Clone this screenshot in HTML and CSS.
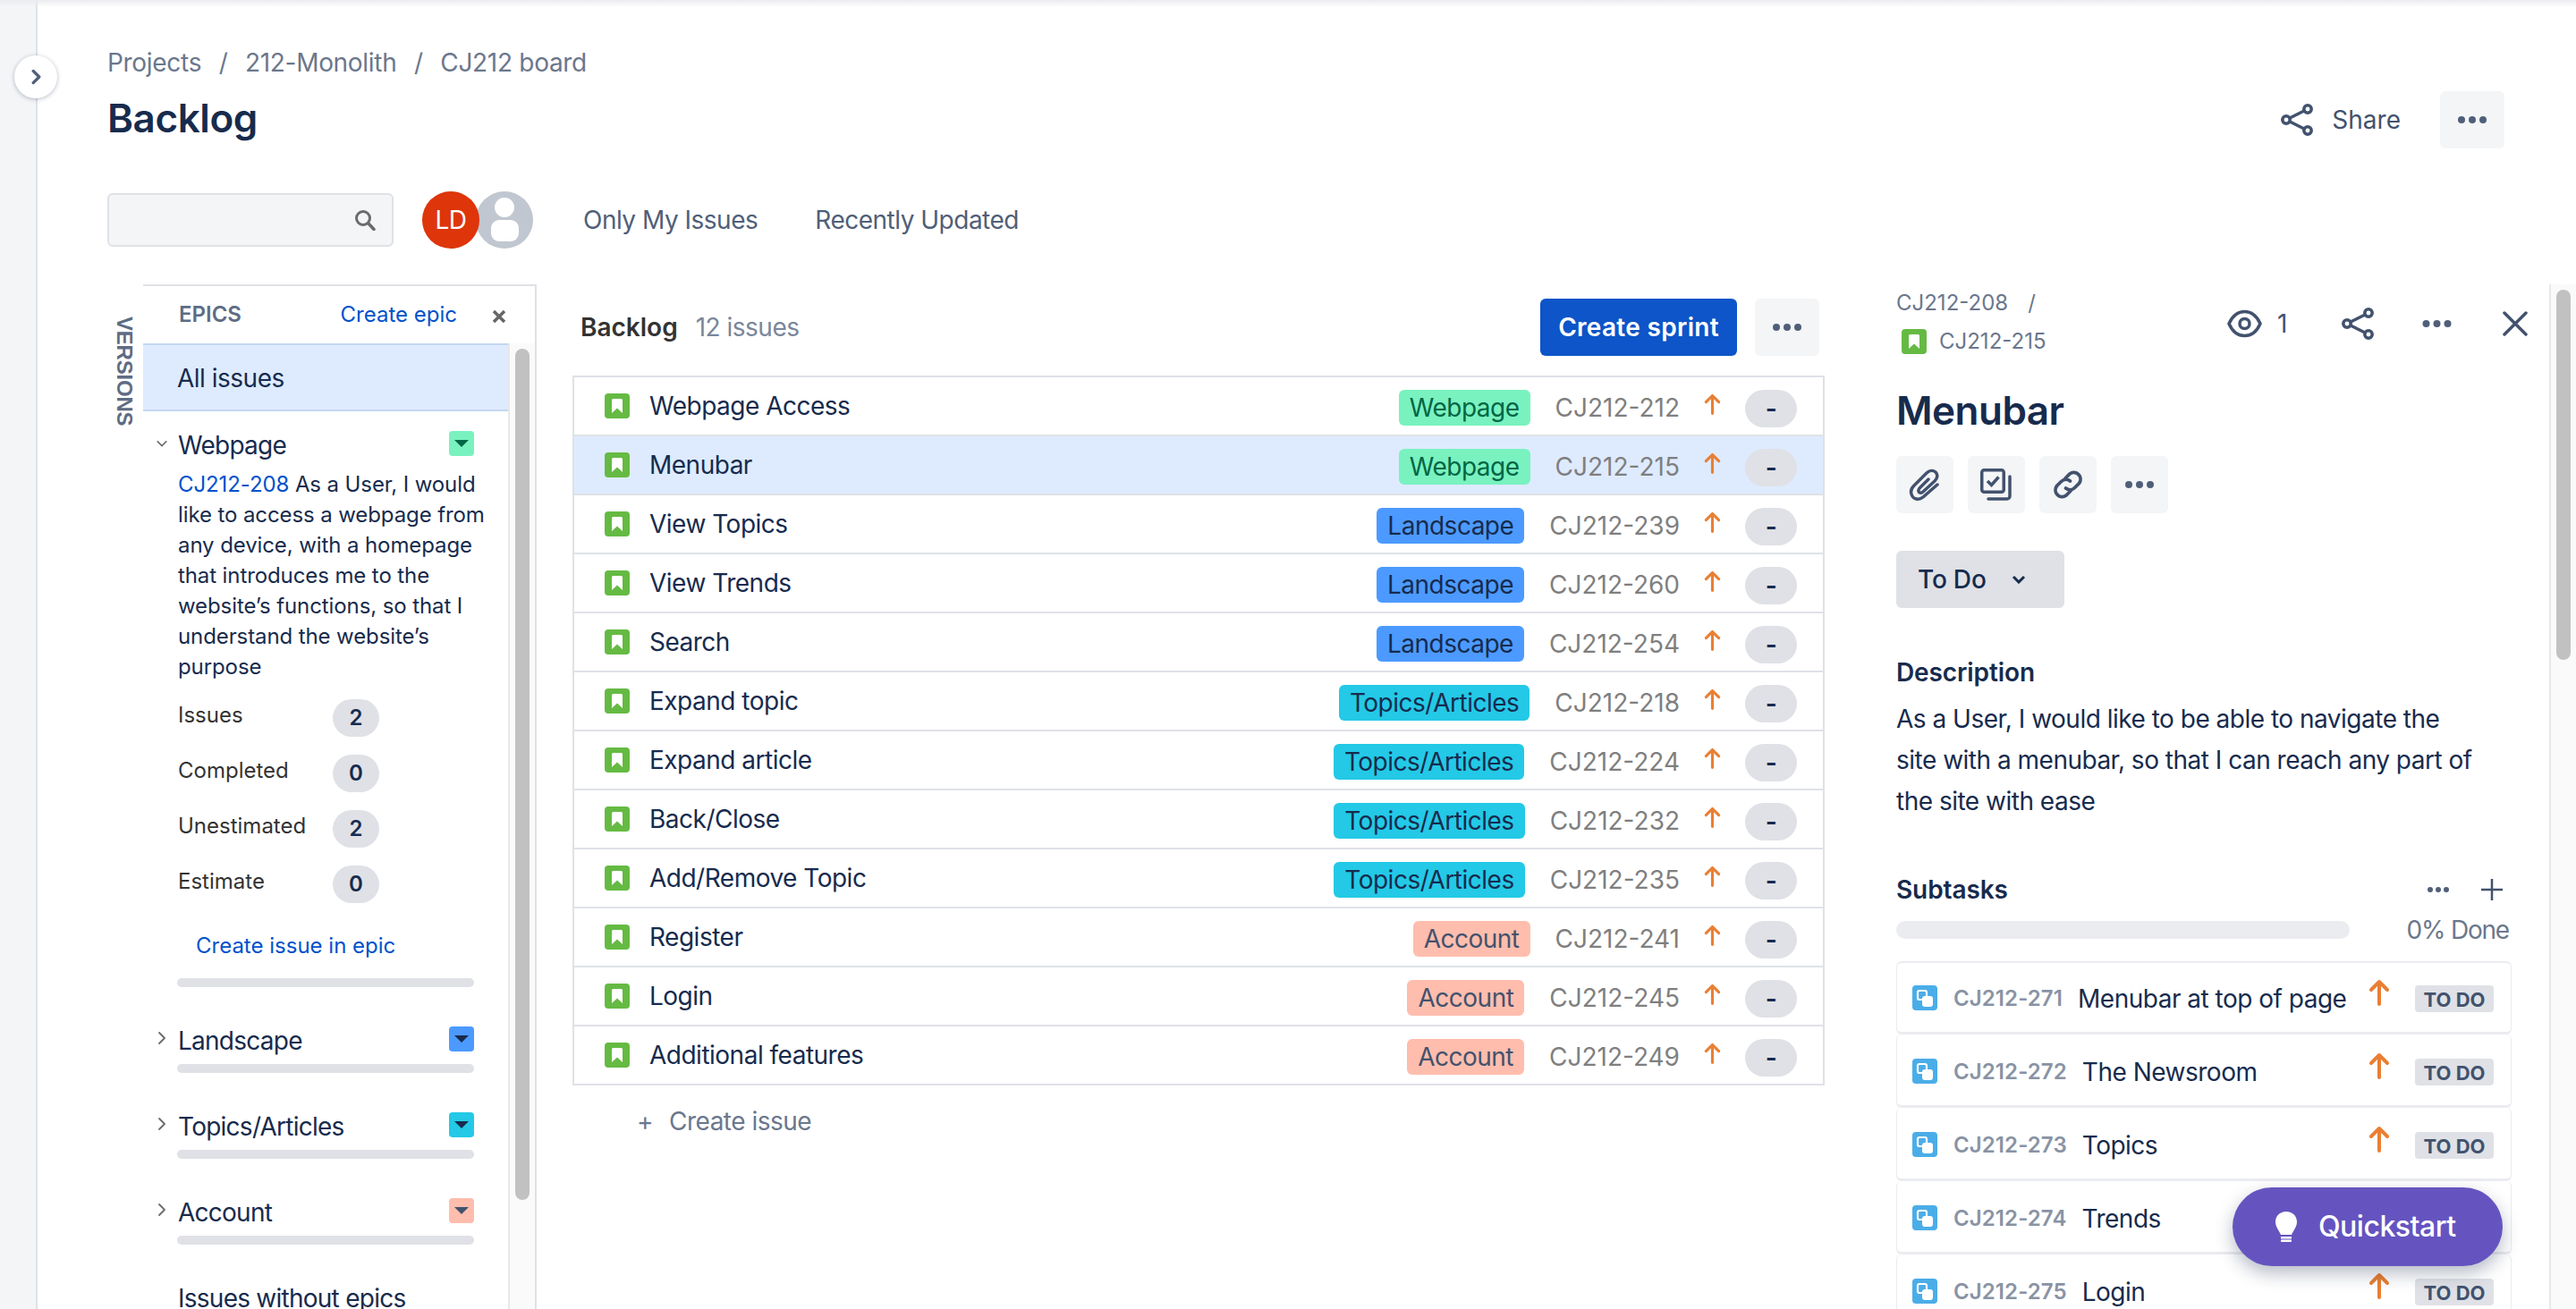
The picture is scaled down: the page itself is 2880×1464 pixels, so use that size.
FILE: index.html
```html
<!DOCTYPE html>
<html lang="en">
<head>
  <meta charset="UTF-8">
  <title>Backlog - CJ212 board</title>
  <link rel="stylesheet" href="styles.css">
</head>
<body>

  <!-- shared icons -->
  <svg class="defs" aria-hidden="true">
    <symbol id="i-story" viewBox="0 0 28 28">
      <rect width="28" height="28" rx="4" fill="#65ba43"/>
      <path d="M9.5 6h9a1.5 1.5 0 0 1 1.500 1.500V22l-6-5.500L8 22V7.500A1.500 1.500 0 0 1 9.500 6z" fill="#fff"/>
    </symbol>
    <symbol id="i-subtask" viewBox="0 0 28 28">
      <rect width="28" height="28" rx="4" fill="#4bade8"/>
      <rect x="6" y="6" width="10" height="10" rx="2" fill="none" stroke="#fff" stroke-width="2.200"/>
      <rect x="11" y="12" width="12" height="12" rx="3" fill="#fff"/>
    </symbol>
    <symbol id="i-up" viewBox="0 0 24 30">
      <path d="M12 28V3M3 12l9-9 9 9" fill="none" stroke="currentColor" stroke-width="4" stroke-linecap="round" stroke-linejoin="round"/>
    </symbol>
    <symbol id="i-dots" viewBox="0 0 32 8">
      <circle cx="4" cy="4" r="4" fill="currentColor"/>
      <circle cx="16" cy="4" r="4" fill="currentColor"/>
      <circle cx="28" cy="4" r="4" fill="currentColor"/>
    </symbol>
    <symbol id="i-share" viewBox="0 0 36 36">
      <g fill="none" stroke="currentColor" stroke-width="3.500">
        <circle cx="30" cy="6" r="4.200"/>
        <circle cx="6" cy="18" r="4.200"/>
        <circle cx="30" cy="30" r="4.200"/>
        <path d="M10 16 26 8M10 20l16 8"/>
      </g>
    </symbol>
    <symbol id="i-right" viewBox="0 0 10 16">
      <path d="M2 2l6 6-6 6" fill="none" stroke="currentColor" stroke-linecap="round" stroke-linejoin="round"/>
    </symbol>
  </svg>

  <div class="top-shade"></div>
  <aside class="rail"></aside>
  <button class="rail-toggle">
    <svg class="rail-chevron"><use href="#i-right"/></svg>
  </button>

  <div class="page">
    <header class="page-head">
      <div>
        <nav class="crumbs">
          <a>Projects</a><span class="slash">/</span><a>212-Monolith</a><span class="slash">/</span><a>CJ212 board</a>
        </nav>
        <h1 class="page-title">Backlog</h1>
      </div>
      <div class="head-actions">
        <svg class="icon-share"><use href="#i-share"/></svg>
        <span class="share-label">Share</span>
        <button class="more-btn"><svg class="dots"><use href="#i-dots"/></svg></button>
      </div>
    </header>

    <div class="filters">
      <div class="search">
        <svg class="search-icon" viewBox="0 0 24 24">
          <circle cx="10" cy="10" r="7.500" fill="none" stroke="currentColor" stroke-width="3"/>
          <path d="M16 16l6 6.500" stroke="currentColor" stroke-width="3.500" stroke-linecap="round"/>
        </svg>
      </div>
      <div class="avatars">
        <span class="avatar-ld">LD</span>
        <svg class="avatar-anon" viewBox="0 0 64 64">
          <circle cx="32" cy="32" r="32" fill="#c1c7d0"/>
          <circle cx="32" cy="18" r="11" fill="#fff"/>
          <rect x="17" y="32" width="31" height="24" rx="9" fill="#fff"/>
        </svg>
      </div>
      <a class="filter-link first">Only My Issues</a>
      <a class="filter-link">Recently Updated</a>
    </div>

    <div class="board">
      <div class="versions-tab">VERSIONS</div>

      <section class="epics">
        <div class="epics-head">
          <span class="epics-title">EPICS</span>
          <a class="create-epic">Create epic</a>
          <svg class="epics-close" viewBox="0 0 16 16">
            <path d="M2 2l12 12M14 2 2 14" stroke="currentColor" stroke-width="3.500"/>
          </svg>
        </div>
        <div class="epics-body">
          <div class="epics-list">
            <div class="all-issues">All issues</div>

            <div class="epic open">
              <div class="epic-head">
                <svg class="epic-chevron down" viewBox="0 0 16 10">
                  <path d="M2 2l6 6 6-6" fill="none" stroke="currentColor" stroke-width="1.800"/>
                </svg>
                <span class="epic-name">Webpage</span>
                <span class="epic-badge green"><i></i></span>
              </div>
              <div class="epic-body">
                <p class="epic-desc"><a>CJ212-208</a> As a User, I would like to access a webpage from any device, with a homepage that introduces me to the website’s functions, so that I understand the website’s purpose</p>
                <div class="stat"><span>Issues</span><b>2</b></div>
                <div class="stat"><span>Completed</span><b>0</b></div>
                <div class="stat"><span>Unestimated</span><b>2</b></div>
                <div class="stat"><span>Estimate</span><b>0</b></div>
                <a class="create-in-epic">Create issue in epic</a>
              </div>
              <div class="epic-bar"></div>
            </div>

            <div class="epic">
              <div class="epic-head">
                <svg class="epic-chevron"><use href="#i-right"/></svg>
                <span class="epic-name">Landscape</span>
                <span class="epic-badge blue"><i></i></span>
              </div>
              <div class="epic-bar"></div>
            </div>

            <div class="epic">
              <div class="epic-head">
                <svg class="epic-chevron"><use href="#i-right"/></svg>
                <span class="epic-name">Topics/Articles</span>
                <span class="epic-badge teal"><i></i></span>
              </div>
              <div class="epic-bar"></div>
            </div>

            <div class="epic">
              <div class="epic-head">
                <svg class="epic-chevron"><use href="#i-right"/></svg>
                <span class="epic-name">Account</span>
                <span class="epic-badge salmon"><i></i></span>
              </div>
              <div class="epic-bar"></div>
            </div>

            <div class="no-epics">Issues without epics</div>
          </div>
          <div class="scroll-track epics-track"><div class="scroll-thumb"></div></div>
        </div>
      </section>

      <section class="backlog">
        <div class="backlog-head">
          <strong class="backlog-title">Backlog</strong>
          <span class="backlog-count">12 issues</span>
          <button class="btn-primary">Create sprint</button>
          <button class="more-btn"><svg class="dots"><use href="#i-dots"/></svg></button>
        </div>

        <div class="issues">
          <div class="issue">
            <svg class="icon-type"><use href="#i-story"/></svg>
            <span class="issue-name">Webpage Access</span>
            <span class="lozenge green">Webpage</span>
            <span class="issue-key">CJ212-212</span>
            <svg class="icon-up"><use href="#i-up"/></svg>
            <span class="estimate">-</span>
          </div>
          <div class="issue selected">
            <svg class="icon-type"><use href="#i-story"/></svg>
            <span class="issue-name">Menubar</span>
            <span class="lozenge green">Webpage</span>
            <span class="issue-key">CJ212-215</span>
            <svg class="icon-up"><use href="#i-up"/></svg>
            <span class="estimate">-</span>
          </div>
          <div class="issue">
            <svg class="icon-type"><use href="#i-story"/></svg>
            <span class="issue-name">View Topics</span>
            <span class="lozenge blue">Landscape</span>
            <span class="issue-key">CJ212-239</span>
            <svg class="icon-up"><use href="#i-up"/></svg>
            <span class="estimate">-</span>
          </div>
          <div class="issue">
            <svg class="icon-type"><use href="#i-story"/></svg>
            <span class="issue-name">View Trends</span>
            <span class="lozenge blue">Landscape</span>
            <span class="issue-key">CJ212-260</span>
            <svg class="icon-up"><use href="#i-up"/></svg>
            <span class="estimate">-</span>
          </div>
          <div class="issue">
            <svg class="icon-type"><use href="#i-story"/></svg>
            <span class="issue-name">Search</span>
            <span class="lozenge blue">Landscape</span>
            <span class="issue-key">CJ212-254</span>
            <svg class="icon-up"><use href="#i-up"/></svg>
            <span class="estimate">-</span>
          </div>
          <div class="issue">
            <svg class="icon-type"><use href="#i-story"/></svg>
            <span class="issue-name">Expand topic</span>
            <span class="lozenge teal">Topics/Articles</span>
            <span class="issue-key">CJ212-218</span>
            <svg class="icon-up"><use href="#i-up"/></svg>
            <span class="estimate">-</span>
          </div>
          <div class="issue">
            <svg class="icon-type"><use href="#i-story"/></svg>
            <span class="issue-name">Expand article</span>
            <span class="lozenge teal">Topics/Articles</span>
            <span class="issue-key">CJ212-224</span>
            <svg class="icon-up"><use href="#i-up"/></svg>
            <span class="estimate">-</span>
          </div>
          <div class="issue">
            <svg class="icon-type"><use href="#i-story"/></svg>
            <span class="issue-name">Back/Close</span>
            <span class="lozenge teal">Topics/Articles</span>
            <span class="issue-key">CJ212-232</span>
            <svg class="icon-up"><use href="#i-up"/></svg>
            <span class="estimate">-</span>
          </div>
          <div class="issue">
            <svg class="icon-type"><use href="#i-story"/></svg>
            <span class="issue-name">Add/Remove Topic</span>
            <span class="lozenge teal">Topics/Articles</span>
            <span class="issue-key">CJ212-235</span>
            <svg class="icon-up"><use href="#i-up"/></svg>
            <span class="estimate">-</span>
          </div>
          <div class="issue">
            <svg class="icon-type"><use href="#i-story"/></svg>
            <span class="issue-name">Register</span>
            <span class="lozenge salmon">Account</span>
            <span class="issue-key">CJ212-241</span>
            <svg class="icon-up"><use href="#i-up"/></svg>
            <span class="estimate">-</span>
          </div>
          <div class="issue">
            <svg class="icon-type"><use href="#i-story"/></svg>
            <span class="issue-name">Login</span>
            <span class="lozenge salmon">Account</span>
            <span class="issue-key">CJ212-245</span>
            <svg class="icon-up"><use href="#i-up"/></svg>
            <span class="estimate">-</span>
          </div>
          <div class="issue">
            <svg class="icon-type"><use href="#i-story"/></svg>
            <span class="issue-name">Additional features</span>
            <span class="lozenge salmon">Account</span>
            <span class="issue-key">CJ212-249</span>
            <svg class="icon-up"><use href="#i-up"/></svg>
            <span class="estimate">-</span>
          </div>
        </div>

        <a class="create-issue"><span class="create-plus">+</span>Create issue</a>
      </section>

      <section class="detail">
        <div class="detail-main">
          <div class="detail-head">
            <div class="detail-crumbs">
              <div class="crumb-row"><a>CJ212-208</a><span class="detail-slash">/</span></div>
              <div class="crumb-row second">
                <svg class="icon-type"><use href="#i-story"/></svg>
                <a>CJ212-215</a>
              </div>
            </div>
            <div class="detail-actions">
              <svg class="icon-eye" viewBox="0 0 39 32">
                <path d="M2 16C6 7 12 2.500 19.500 2.500S33 7 37 16C33 25 27 29.500 19.500 29.500S6 25 2 16z" fill="none" stroke="currentColor" stroke-width="3.500"/>
                <circle cx="19.500" cy="16" r="5.500" fill="none" stroke="currentColor" stroke-width="3.500"/>
              </svg>
              <span class="watch-count">1</span>
              <svg class="icon-share"><use href="#i-share"/></svg>
              <svg class="dots"><use href="#i-dots"/></svg>
              <svg class="icon-close" viewBox="0 0 28 28">
                <path d="M2 2l24 24M26 2 2 26" stroke="currentColor" stroke-width="3.500" stroke-linecap="round"/>
              </svg>
            </div>
          </div>

          <h2 class="detail-title">Menubar</h2>

          <div class="tool-row">
            <button class="tool-btn">
              <svg class="tool-icon" viewBox="0 0 36 36">
                <path d="M32 18 16 32C11 36 5 34 3.500 30 1.500 26 3 22 6 19L20 5C23 2 27 1.500 30 4 33 7 32 11 29 14L16 26C14 28 11.500 27.500 11 25.500 10.500 24 11 23 12.500 21.500L22 12" fill="none" stroke="currentColor" stroke-width="3.500" stroke-linecap="round" stroke-linejoin="round"/>
              </svg>
            </button>
            <button class="tool-btn">
              <svg class="tool-icon" viewBox="0 0 36 36">
                <rect x="1.750" y="1.750" width="24.500" height="24.500" rx="2.500" fill="none" stroke="currentColor" stroke-width="3.500"/>
                <path d="M8 14l4.500 4.500 8-9" fill="none" stroke="currentColor" stroke-width="3.500"/>
                <path d="M33 9v22a3 3 0 0 1-3 3H9" fill="none" stroke="currentColor" stroke-width="3.500" stroke-linecap="round"/>
              </svg>
            </button>
            <button class="tool-btn">
              <svg class="tool-icon" viewBox="0 0 36 36">
                <g fill="none" stroke="currentColor" stroke-width="3.800" stroke-linecap="round">
                  <path d="M15 11l5-5a7.500 7.500 0 0 1 10.500 10.500l-5 5a7.500 7.500 0 0 1-10 .5"/>
                  <path d="M21 25l-5 5A7.500 7.500 0 0 1 5.500 19.500l5-5a7.500 7.500 0 0 1 10-.5"/>
                </g>
              </svg>
            </button>
            <button class="tool-btn"><svg class="dots"><use href="#i-dots"/></svg></button>
          </div>

          <button class="status-btn">To Do
            <svg class="status-chevron" viewBox="0 0 16 10">
              <path d="M2 2l6 6 6-6" fill="none" stroke="currentColor" stroke-width="3"/>
            </svg>
          </button>

          <h3 class="detail-label first">Description</h3>
          <p class="detail-desc">As a User, I would like to be able to navigate the<br>site with a menubar, so that I can reach any part of<br>the site with ease</p>

          <div class="subtasks-head">
            <h3 class="detail-label">Subtasks</h3>
            <svg class="dots small"><use href="#i-dots"/></svg>
            <svg class="icon-plus" viewBox="0 0 24 24">
              <path d="M12 0v24M0 12h24" stroke="currentColor" stroke-width="2.500"/>
            </svg>
          </div>
          <div class="progress-row">
            <div class="progress"></div>
            <span class="progress-label">0% Done</span>
          </div>

          <div class="subtasks">
            <div class="subtask">
              <svg class="icon-type"><use href="#i-subtask"/></svg>
              <span class="subtask-key">CJ212-271</span>
              <span class="subtask-name">Menubar at top of page</span>
              <svg class="icon-up tall"><use href="#i-up"/></svg>
              <span class="todo">TO DO</span>
            </div>
            <div class="subtask">
              <svg class="icon-type"><use href="#i-subtask"/></svg>
              <span class="subtask-key">CJ212-272</span>
              <span class="subtask-name">The Newsroom</span>
              <svg class="icon-up tall"><use href="#i-up"/></svg>
              <span class="todo">TO DO</span>
            </div>
            <div class="subtask">
              <svg class="icon-type"><use href="#i-subtask"/></svg>
              <span class="subtask-key">CJ212-273</span>
              <span class="subtask-name">Topics</span>
              <svg class="icon-up tall"><use href="#i-up"/></svg>
              <span class="todo">TO DO</span>
            </div>
            <div class="subtask">
              <svg class="icon-type"><use href="#i-subtask"/></svg>
              <span class="subtask-key">CJ212-274</span>
              <span class="subtask-name">Trends</span>
              <svg class="icon-up tall"><use href="#i-up"/></svg>
              <span class="todo">TO DO</span>
            </div>
            <div class="subtask">
              <svg class="icon-type"><use href="#i-subtask"/></svg>
              <span class="subtask-key">CJ212-275</span>
              <span class="subtask-name">Login</span>
              <svg class="icon-up tall"><use href="#i-up"/></svg>
              <span class="todo">TO DO</span>
            </div>
          </div>
        </div>
        <div class="scroll-track detail-track"><div class="scroll-thumb"></div></div>
      </section>
    </div>
  </div>

  <button class="quickstart">
    <svg class="bulb" viewBox="0 0 26 34">
      <path d="M13 0C6 0 1 5 1 11.500 1 17 5 21 7 26h12c2-5 6-9 6-14.500C25 5 20 0 13 0z" fill="#fff"/>
      <rect x="7" y="28" width="12" height="2.500" fill="#fff"/>
      <rect x="7" y="31.500" width="12" height="2.500" rx="1" fill="#fff"/>
    </svg>
    Quickstart
  </button>

</body>
</html>
```

FILE: styles.css
```css
* {
  box-sizing: border-box;
}
html, body {
  margin: 0;
  height: 100%;
}
body {
  display: flex;
  width: 2880px;
  height: 1464px;
  overflow: hidden;
  background: #fff;
  color: #172b4d;
  font: 28px/36px Inter, "Noto Sans", sans-serif;
  letter-spacing: -.5px;
}
button {
  font: inherit;
  letter-spacing: inherit;
  border: 0;
  padding: 0;
  color: inherit;
}
h1, h2, h3, p {
  margin: 0;
}
.defs {
  display: none;
}

/* overlays */
.top-shade {
  position: absolute;
  left: 0;
  top: 0;
  width: 100%;
  height: 8px;
  background: linear-gradient(#ebecf0, rgba(255, 255, 255, 0));
}
.rail-toggle {
  position: absolute;
  left: 16px;
  top: 62px;
  width: 48px;
  height: 48px;
  border-radius: 50%;
  background: #fff;
  box-shadow: 0 1px 5px rgba(9, 30, 66, .3);
  color: #505f79;
  display: flex;
  align-items: center;
  justify-content: center;
}
.rail-chevron {
  width: 11px;
  height: 18px;
  stroke-width: 3px;
}
.quickstart {
  position: absolute;
  left: 2496px;
  top: 1328px;
  width: 302px;
  height: 88px;
  border-radius: 44px;
  background: #6554c0;
  color: #fff;
  font-size: 32px;
  font-weight: 500;
  display: flex;
  align-items: center;
  padding-left: 47px;
  gap: 23px;
  box-shadow: 0 8px 20px rgba(9, 30, 66, .3);
}
.bulb {
  width: 26px;
  height: 34px;
}

/* left rail */
.rail {
  flex: none;
  width: 42px;
  background: #f4f5f7;
  border-right: 2px solid #dfe1e6;
}
.page {
  flex: 1;
  min-width: 0;
  padding-left: 78px;
}

/* page header */
.page-head {
  display: flex;
  justify-content: space-between;
  padding: 52px 80px 0 0;
}
.crumbs {
  color: #6b778c;
  letter-spacing: -.3px;
}
.slash {
  margin: 0 19.500px;
}
.page-title {
  margin-top: 16px;
  font-size: 44px;
  line-height: 56px;
  font-weight: 600;
  letter-spacing: -.4px;
}
.head-actions {
  display: flex;
  align-items: center;
  height: 64px;
  margin-top: 50px;
  color: #42526e;
}
.icon-share {
  width: 36px;
  height: 36px;
  color: #42526e;
}
.share-label {
  margin: 0 44px 0 21px;
  letter-spacing: 0;
}
.more-btn {
  width: 72px;
  height: 64px;
  border-radius: 6px;
  background: #f4f5f7;
  color: #505f79;
  display: flex;
  align-items: center;
  justify-content: center;
}
.dots {
  width: 32px;
  height: 8px;
  color: #505f79;
}
.dots.small {
  width: 24px;
  height: 6px;
}

/* filters */
.filters {
  display: flex;
  align-items: center;
  height: 64px;
  margin-top: 48px;
  color: #505f79;
}
.search {
  width: 320px;
  height: 60px;
  background: #f4f5f7;
  border: 2px solid #dfe1e6;
  border-radius: 6px;
  display: flex;
  align-items: center;
  justify-content: flex-end;
  padding-right: 18px;
}
.search-icon {
  width: 24px;
  height: 24px;
  color: #6b6b6b;
}
.avatars {
  display: flex;
  margin-left: 32px;
}
.avatar-ld {
  position: relative;
  z-index: 1;
  width: 64px;
  height: 64px;
  border-radius: 50%;
  background: #de350b;
  color: #fff;
  text-align: center;
  line-height: 64px;
}
.avatar-anon {
  width: 64px;
  height: 64px;
  margin-left: -4px;
}
.filter-link {
  margin-left: 64px;
}
.filter-link.first {
  margin-left: 56px;
}

/* board columns */
.board {
  display: flex;
  height: 1146px;
  margin-top: 40px;
}
.versions-tab {
  flex: none;
  width: 40px;
  padding: 36px 9px 0 0;
  writing-mode: vertical-rl;
  font-family: "Liberation Sans", Arial, sans-serif;
  font-size: 24px;
  line-height: 24px;
  font-weight: 700;
  letter-spacing: -.2px;
  color: #5e6c84;
}

/* epics panel */
.epics {
  flex: none;
  width: 440px;
  display: flex;
  flex-direction: column;
  border-top: 2px solid #dfe1e6;
  border-right: 2px solid #dfe1e6;
  overflow: hidden;
}
.epics-head {
  flex: none;
  height: 64px;
  display: flex;
  align-items: center;
  padding: 0 32px 0 40px;
  font-size: 24px;
  letter-spacing: 0;
}
.epics-title {
  flex: 1;
  font-weight: 600;
  color: #5e6c84;
}
.create-epic {
  color: #0052cc;
}
.epics-close {
  width: 16px;
  height: 16px;
  margin: 4px 0 0 39px;
  color: #666;
}
.epics-body {
  flex: 1;
  min-height: 0;
  display: flex;
}
.epics-list {
  flex: none;
  width: 408px;
  overflow: hidden;
}
.all-issues {
  height: 76px;
  line-height: 74px;
  padding-left: 38px;
  background: #deebff;
  border-top: 2px solid #c4d7f0;
  border-bottom: 2px solid #c4d7f0;
}
.epic {
  padding: 0 38px 0 14px;
  margin-top: 42px;
}
.epic.open {
  margin-top: 20px;
}
.epic-head {
  display: flex;
  align-items: flex-start;
}
.epic-chevron {
  flex: none;
  width: 10px;
  height: 16px;
  margin: 7px 13px 0 2px;
  color: #6b6b6b;
  stroke-width: 1.8px;
}
.epic-chevron.down {
  width: 14px;
  height: 10px;
  margin: 11px 11px 0 0;
}
.epic-name {
  flex: 1;
  letter-spacing: -.75px;
}
.epic-badge {
  flex: none;
  width: 28px;
  height: 28px;
  margin-top: 2px;
  border-radius: 4px;
  display: flex;
  align-items: center;
  justify-content: center;
}
.epic-badge i {
  width: 0;
  height: 0;
  border: 8px solid transparent;
  border-bottom: 0;
  border-top-color: #172b4d;
}
.epic-badge.green {
  background: #79f2c0;
}
.epic-badge.green i {
  border-top-color: #006644;
}
.epic-badge.blue {
  background: #4c9aff;
}
.epic-badge.teal {
  background: #23c9e6;
}
.epic-badge.salmon {
  background: #ffbdad;
}
.epic-badge.salmon i {
  border-top-color: #42526e;
}
.epic-body {
  padding-left: 25px;
  font-size: 24px;
  letter-spacing: 0;
}
.epic-desc {
  width: 350px;
  margin-top: 9px;
  line-height: 34px;
  letter-spacing: -.1px;
}
.epic-desc a {
  color: #0052cc;
}
.stat {
  display: flex;
  align-items: flex-start;
  margin-top: 20px;
  color: #333;
}
.epic-desc + .stat {
  margin-top: 19px;
}
.stat span {
  flex: none;
  width: 173px;
}
.stat b,
.estimate {
  height: 42px;
  border-radius: 21px;
  background: #dfe1e6;
  color: #172b4d;
  font-weight: 600;
  text-align: center;
  line-height: 42px;
}
.stat b {
  width: 52px;
}
.create-in-epic {
  display: block;
  margin: 30px 0 0 20px;
  color: #0052cc;
}
.epic-bar {
  height: 10px;
  margin: 8px 0 0 24px;
  border-radius: 5px;
  background: #dfe1e6;
}
.epic-body + .epic-bar {
  margin-top: 18px;
}
.no-epics {
  margin: 42px 0 0 39px;
  letter-spacing: -.75px;
}

/* scrollbars */
.scroll-track {
  flex: none;
  background: #fafafa;
}
.scroll-thumb {
  width: 16px;
  background: #c1c1c1;
  border-radius: 8px;
}
.epics-track {
  width: 30px;
  padding: 6px 0 0 6px;
  border-left: 2px solid #e8e8e8;
}
.epics-track .scroll-thumb {
  height: 952px;
}
.detail-track {
  width: 30px;
  padding: 6px 0 0 6px;
  border-left: 2px solid #e8e8e8;
}
.detail-track .scroll-thumb {
  height: 414px;
}

/* backlog list */
.backlog {
  flex: none;
  width: 1480px;
  padding: 16px 40px 0;
}
.backlog-head {
  display: flex;
  align-items: center;
  height: 64px;
  padding-left: 9px;
}
.backlog-title {
  font-weight: 600;
  color: #333;
  letter-spacing: 0;
}
.backlog-count {
  margin-left: 20px;
  color: #7a869a;
}
.btn-primary {
  margin: 0 20px 0 auto;
  width: 220px;
  height: 64px;
  border-radius: 6px;
  background: #0d55c8;
  color: #fff;
  font-weight: 600;
  letter-spacing: .3px;
}
.backlog-head .more-btn {
  margin-right: 6px;
}
.issues {
  margin-top: 22px;
  border: 2px solid #dfe1e6;
  border-bottom: 0;
}
.issue {
  display: flex;
  align-items: center;
  height: 66px;
  padding: 0 29px 0 34px;
  border-bottom: 2px solid #dfe1e6;
}
.issue.selected {
  background: #deebff;
}
.icon-type {
  flex: none;
  width: 28px;
  height: 28px;
}
.issue-name {
  margin-left: 22px;
}
.lozenge {
  margin: 4px 0 0 auto;
  height: 40px;
  padding: 0 12px;
  border-radius: 6px;
  line-height: 40px;
}
.lozenge.green {
  background: #79f2c0;
  color: #006644;
}
.lozenge.blue {
  background: #4c9aff;
  color: #172b4d;
}
.lozenge.teal {
  background: #23c9e6;
  color: #172b4d;
}
.lozenge.salmon {
  background: #ffbdad;
  color: #42526e;
}
.issue-key {
  margin: 4px 0 0 28px;
  font-size: 28px;
  letter-spacing: 0;
  color: #7f7f7f;
}
.icon-up {
  flex: none;
  width: 19px;
  height: 24px;
  margin: -4px 0 0 27px;
  color: #e97f33;
}
.estimate {
  flex: none;
  width: 58px;
  margin: 6px 0 0 27px;
}
.create-issue {
  display: block;
  margin: 22px 0 0 72px;
  color: #6b778c;
}
.create-plus {
  display: inline-block;
  width: 36px;
}

/* issue detail */
.detail {
  flex: 1;
  min-width: 0;
  display: flex;
  padding-left: 40px;
}
.detail-main {
  flex: 1;
  min-width: 0;
  padding-top: 3px;
}
.detail-head {
  display: flex;
  justify-content: space-between;
  padding-right: 24px;
}
.detail-crumbs {
  font-size: 24px;
  letter-spacing: 0;
  color: #6b778c;
}
.crumb-row {
  display: flex;
  align-items: center;
  height: 36px;
}
.crumb-row.second {
  margin-top: 7px;
  padding-left: 6px;
  gap: 14px;
}
.detail-slash {
  margin-left: 22px;
}
.detail-actions {
  display: flex;
  align-items: center;
  height: 36px;
  margin-top: 23px;
  color: #42526e;
}
.icon-eye {
  width: 39px;
  height: 32px;
}
.watch-count {
  margin: 0 61px 0 17px;
}
.detail-actions .dots {
  width: 37px;
  margin: 0 55px 0 52px;
}
.icon-close {
  width: 28px;
  height: 28px;
}
.detail-title {
  margin-top: 31px;
  font-size: 44px;
  line-height: 56px;
  font-weight: 600;
  letter-spacing: -.5px;
}
.tool-row {
  display: flex;
  gap: 16px;
  margin-top: 23px;
}
.tool-btn {
  width: 64px;
  height: 64px;
  border-radius: 6px;
  background: #f4f5f7;
  display: flex;
  align-items: center;
  justify-content: center;
  color: #42526e;
}
.tool-icon {
  width: 36px;
  height: 36px;
}
.status-btn {
  display: flex;
  align-items: center;
  width: 188px;
  height: 64px;
  margin-top: 42px;
  padding-left: 24px;
  border-radius: 6px;
  background: #dfe1e6;
  font-weight: 500;
  color: #172b4d;
  letter-spacing: -.2px;
}
.status-chevron {
  width: 16px;
  height: 10px;
  margin-left: 28px;
}
.detail-label {
  font-size: 28px;
  font-weight: 600;
  letter-spacing: -.1px;
}
.detail-label.first {
  margin-top: 54px;
}
.detail-desc {
  margin-top: 11px;
  line-height: 46px;
}
.subtasks-head {
  display: flex;
  align-items: center;
  margin: 58px 52px 0 0;
}
.subtasks-head .detail-label {
  flex: 1;
}
.icon-plus {
  width: 24px;
  height: 24px;
  margin-left: 36px;
  color: #42526e;
}
.progress-row {
  display: flex;
  align-items: center;
  height: 20px;
  margin: 17px 45px 0 0;
}
.progress {
  flex: none;
  width: 507px;
  height: 20px;
  border-radius: 10px;
  background: #ebecf0;
}
.progress-label {
  margin-left: auto;
  color: #6b778c;
  letter-spacing: -1.2px;
}
.subtasks {
  width: 688px;
  margin-top: 25px;
}
.subtask {
  display: flex;
  align-items: flex-start;
  height: 82px;
  padding: 27px 19px 0 17px;
  border: 1px solid #ebecf0;
  border-top-width: 0;
  border-bottom-width: 3px;
  border-radius: 6px;
}
.subtask:first-child {
  padding-top: 25px;
  border-top-width: 2px;
}
.subtask-key {
  margin: -3px 0 0 18px;
  font-size: 24px;
  font-weight: 600;
  letter-spacing: .1px;
  color: #8993a4;
}
.subtask-name {
  margin: -3px 0 0 17px;
}
.icon-up.tall {
  width: 24px;
  height: 30px;
  margin: -7px 0 0 auto;
}
.todo {
  margin-left: 28px;
  width: 88px;
  height: 30px;
  border-radius: 4px;
  background: #dfe1e6;
  color: #42526e;
  font-size: 22px;
  font-weight: 700;
  letter-spacing: 0;
  line-height: 32px;
  text-align: center;
}
```
